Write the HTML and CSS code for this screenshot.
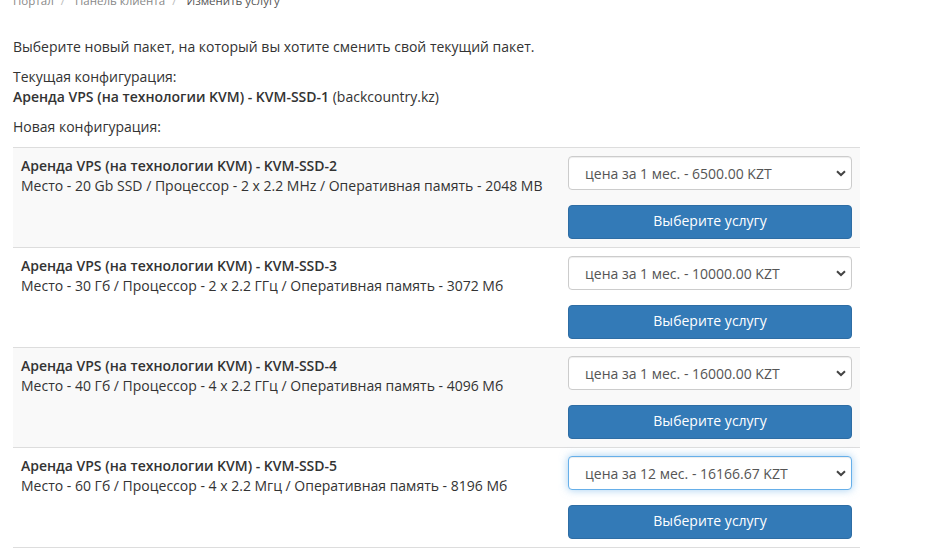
FILE: index.html
```html
<!DOCTYPE html>
<html lang="ru">
<head>
<meta charset="utf-8">
<title>Изменить услугу</title>
<link rel="stylesheet" href="styles.css">
</head>
<body>
<div class="page">
  <ol class="breadcrumb">
    <li><a href="#">Портал</a></li>
    <li class="sep">/</li>
    <li><a href="#">Панель клиента</a></li>
    <li class="sep">/</li>
    <li class="active">Изменить услугу</li>
  </ol>

  <p>Выберите новый пакет, на который вы хотите сменить свой текущий пакет.</p>
  <p>Текущая конфигурация:<br><strong>Аренда VPS (на технологии KVM) - KVM-SSD-1</strong> (backcountry.kz)</p>
  <p>Новая конфигурация:</p>

  <table class="plans">
    <tr>
      <td class="info"><strong>Аренда VPS (на технологии KVM) - KVM-SSD-2</strong><br>Место - 20 Gb SSD / Процессор - 2 x 2.2 MHz / Оперативная память - 2048 MB</td>
      <td class="act">
        <div class="sel-wrap">
          <select class="sel"><option>цена за 1 мес. - 6500.00 KZT</option></select>
          <svg class="chev" width="10" height="7" viewBox="0 0 10 7"><path d="M1 1.2 L5 5 L9 1.2" fill="none" stroke="#444" stroke-width="2"/></svg>
        </div>
        <button class="btn">Выберите услугу</button>
      </td>
    </tr>
    <tr>
      <td class="info"><strong>Аренда VPS (на технологии KVM) - KVM-SSD-3</strong><br>Место - 30 Гб / Процессор - 2 x 2.2 ГГц / Оперативная память - 3072 Мб</td>
      <td class="act">
        <div class="sel-wrap">
          <select class="sel"><option>цена за 1 мес. - 10000.00 KZT</option></select>
          <svg class="chev" width="10" height="7" viewBox="0 0 10 7"><path d="M1 1.2 L5 5 L9 1.2" fill="none" stroke="#444" stroke-width="2"/></svg>
        </div>
        <button class="btn">Выберите услугу</button>
      </td>
    </tr>
    <tr>
      <td class="info"><strong>Аренда VPS (на технологии KVM) - KVM-SSD-4</strong><br>Место - 40 Гб / Процессор - 4 x 2.2 ГГц / Оперативная память - 4096 Мб</td>
      <td class="act">
        <div class="sel-wrap">
          <select class="sel"><option>цена за 1 мес. - 16000.00 KZT</option></select>
          <svg class="chev" width="10" height="7" viewBox="0 0 10 7"><path d="M1 1.2 L5 5 L9 1.2" fill="none" stroke="#444" stroke-width="2"/></svg>
        </div>
        <button class="btn">Выберите услугу</button>
      </td>
    </tr>
    <tr>
      <td class="info"><strong>Аренда VPS (на технологии KVM) - KVM-SSD-5</strong><br>Место - 60 Гб / Процессор - 4 x 2.2 Мгц / Оперативная память - 8196 Мб</td>
      <td class="act">
        <div class="sel-wrap">
          <select class="sel focus"><option>цена за 12 мес. - 16166.67 KZT</option></select>
          <svg class="chev" width="10" height="7" viewBox="0 0 10 7"><path d="M1 1.2 L5 5 L9 1.2" fill="none" stroke="#444" stroke-width="2"/></svg>
        </div>
        <button class="btn">Выберите услугу</button>
      </td>
    </tr>
  </table>
</div>
</body>
</html>
```

FILE: styles.css
```css
html, body {
  margin: 0;
  padding: 0;
  background: #fff;
}
body {
  font-family: "Open Sans", "Liberation Sans", sans-serif;
  font-size: 14px;
  line-height: 20px;
  color: #333;
}
.page {
  width: 847px;
  padding-left: 13px;
  overflow: hidden;
}
.breadcrumb {
  list-style: none;
  margin: -9px 0 26px 0;
  padding: 0;
  display: flex;
  gap: 7px;
  font-size: 11.5px;
  line-height: 20px;
}
.breadcrumb a {
  color: #888;
  text-decoration: none;
}
.breadcrumb .sep {
  color: #bbb;
  padding-right: 3px;
}
.breadcrumb .active {
  color: #555;
}
p {
  margin: 0 0 10px 0;
}
strong {
  font-weight: 600;
}
.plans {
  width: 847px;
  border-collapse: collapse;
  border-spacing: 0;
}
.plans td {
  border-top: 1px solid #ddd;
  border-bottom: 1px solid #ddd;
  padding: 8px;
  vertical-align: top;
}
.plans tr:nth-child(odd) td {
  background: #f9f9f9;
}
.plans .act {
  width: 284px;
}
.sel-wrap {
  position: relative;
  height: 34px;
  margin-bottom: 15px;
}
.sel {
  appearance: none;
  -webkit-appearance: none;
  display: block;
  width: 100%;
  height: 34px;
  box-sizing: border-box;
  padding: 0 12px 0 16px;
  font-family: "Open Sans", "Liberation Sans", sans-serif;
  font-size: 14px;
  color: #555;
  background: #fff;
  border: 1px solid #ccc;
  border-radius: 4px;
  box-shadow: inset 0 1px 1px rgba(0,0,0,.075);
  outline: none;
}
.sel.focus {
  border-color: #66afe9;
  box-shadow: inset 0 1px 1px rgba(0,0,0,.075), 0 0 8px rgba(102,175,233,.6);
}
.chev {
  position: absolute;
  right: 6px;
  top: 14px;
  pointer-events: none;
}
.btn {
  display: block;
  width: 100%;
  height: 34px;
  box-sizing: border-box;
  padding: 0 12px 3px 12px;
  font-family: "Open Sans", "Liberation Sans", sans-serif;
  font-size: 14px;
  line-height: 20px;
  color: #fff;
  background: #337ab7;
  border: 1px solid #2e6da4;
  border-radius: 4px;
  cursor: pointer;
}
```
